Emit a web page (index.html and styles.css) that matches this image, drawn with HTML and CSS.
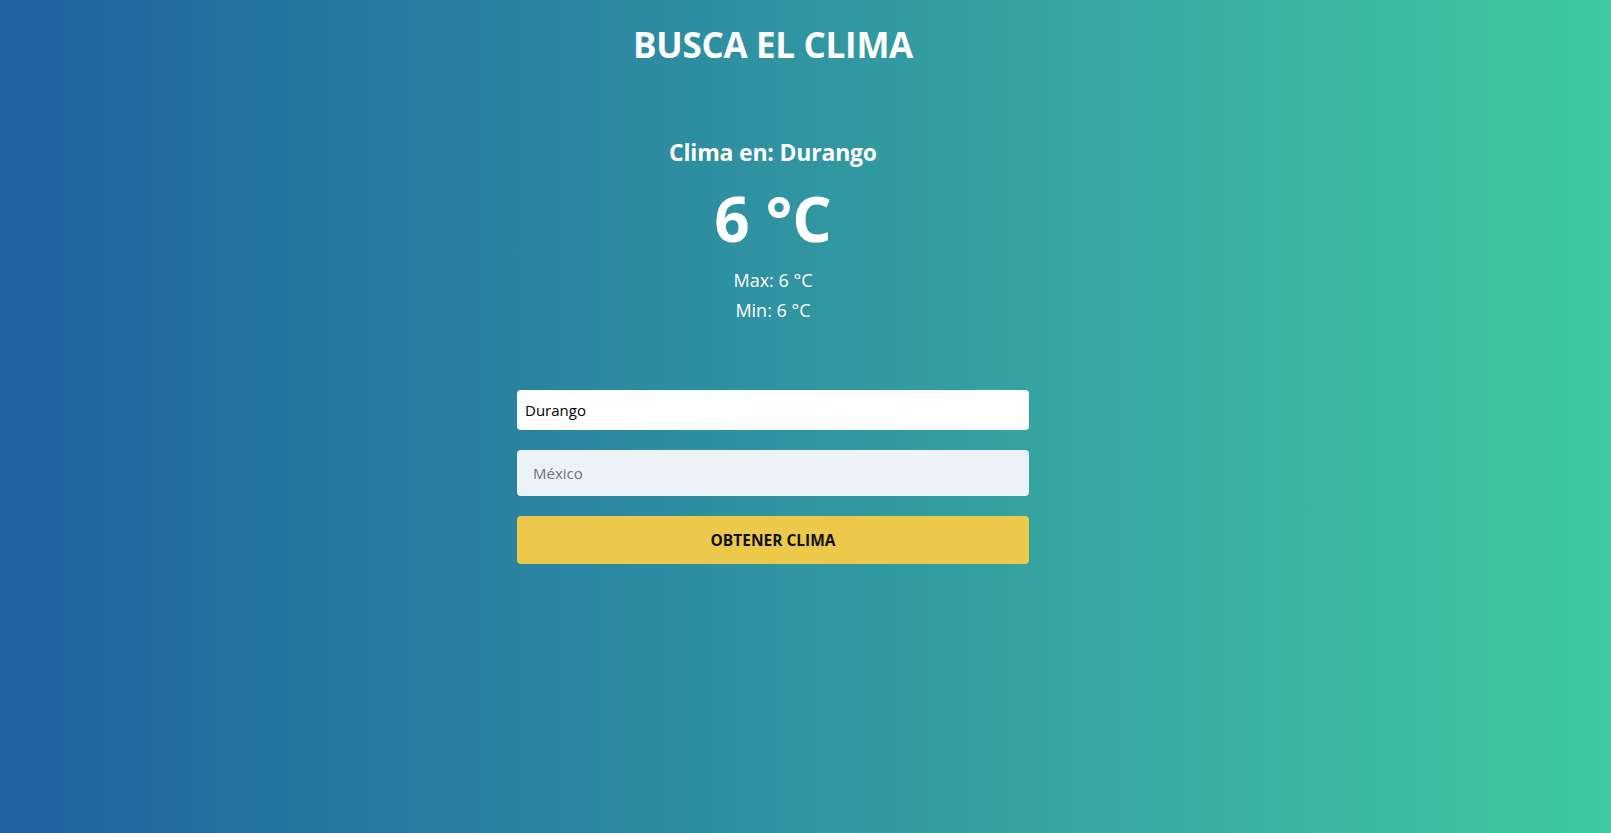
FILE: index.html
```html
<!DOCTYPE html>
<html lang="es">
<head>
<meta charset="utf-8">
<title>Busca el clima</title>
<link rel="stylesheet" href="styles.css">
</head>
<body>
<main class="page">
  <h1 class="title">BUSCA EL CLIMA</h1>
  <section class="weather">
    <h2 class="weather-city">Clima en: Durango</h2>
    <p class="weather-temp">6 °C</p>
    <p class="weather-range">Max: 6 °C</p>
    <p class="weather-range">Min: 6 °C</p>
  </section>
  <form class="form">
    <input class="input input-city" type="text" value="Durango">
    <input class="input input-country" type="text" placeholder="México">
    <button class="button" type="button">OBTENER CLIMA</button>
  </form>
</main>
</body>
</html>
```
FILE: styles.css
```css
* { box-sizing: border-box; }
html, body { margin: 0; height: 100%; }
body {
  background: linear-gradient(to right, #1f62a1, #41c8a1);
  font-family: "Open Sans", "Noto Sans", sans-serif;
  color: #fff;
}
.page {
  min-height: 100%;
  padding-right: 65px;
  display: flex;
  flex-direction: column;
  align-items: center;
}
.title {
  margin: 25px 0 0;
  font-size: 35px;
  line-height: 40px;
  font-weight: 700;
  letter-spacing: -0.3px;
}
.weather {
  margin-top: 71px;
  text-align: center;
}
.weather-city {
  margin: 0;
  font-size: 23px;
  line-height: 32px;
  font-weight: 700;
  letter-spacing: -0.2px;
}
.weather-temp {
  margin: 10px 0 7px;
  font-size: 62px;
  line-height: 80px;
  font-weight: 700;
}
.weather-range {
  margin: 0;
  font-size: 18px;
  line-height: 30px;
}
.form {
  margin-top: 65px;
  width: 512px;
  display: flex;
  flex-direction: column;
  gap: 20px;
}
.input {
  display: block;
  width: 100%;
  border: none;
  border-radius: 4px;
  font-family: inherit;
  font-size: 15px;
  outline: none;
}
.input-city {
  height: 40px;
  padding: 0 8px;
  background: #fff;
  color: #000;
}
.input-country {
  height: 46px;
  padding: 0 16px;
  background: #edf2f7;
  color: #4a5568;
}
.input-country::placeholder { color: #6b7280; }
.button {
  height: 48px;
  border: none;
  border-radius: 4px;
  background: #ecc94b;
  color: #111;
  font-family: inherit;
  font-size: 15.5px;
  font-weight: 700;
}
```
